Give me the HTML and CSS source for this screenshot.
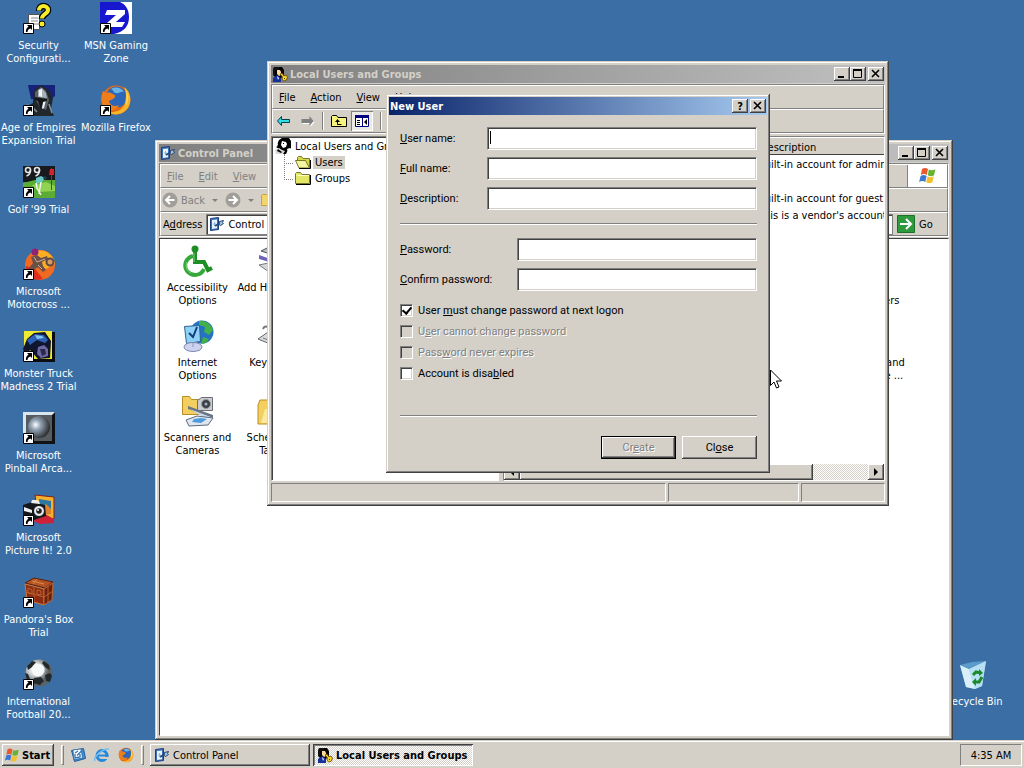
FILE: index.html
```html
<!DOCTYPE html>
<html lang="en">

<head>
  <meta charset="UTF-8">
  <meta name="viewport" content="width=device-width, initial-scale=1.0">
  <title>Desktop</title>
  <link rel="stylesheet" href="styles.css">
</head>

<body>
  <!-- shared icons -->
  <svg class="sprite" aria-hidden="true">
    <symbol id="shortcut" viewBox="0 0 11 11">
      <path fill="#fff" stroke="#000" d="M.5.5h10v10H.5z"/>
      <path d="M4 2h5v5L7.500 5.500C5.500 6 4.500 7 4.500 9H3C2.500 7 3.500 5 5.500 3.500z"/>
    </symbol>
    <symbol id="panel" viewBox="0 0 16 16">
      <path fill="#3d6fb5" stroke="#1c3f80" d="M1.500 2.500l8-1v12l-8 1z"/>
      <path fill="#e6f3fc" d="M3 4l5-.6v8.800L3 13z"/>
      <path fill="none" stroke="#8fbde6" d="M5.500 6v4M4 8h3"/>
      <path fill="none" stroke="#2b4a75" stroke-width="2" d="M6 10l5-3"/>
      <path fill="#9fc3e8" stroke="#24436e" d="M10.500 5.500l4-1-1 2 1 1-3 2-1.500-1z"/>
    </symbol>
    <symbol id="users" viewBox="0 0 16 16">
      <path d="M1 4l3-3h6l2 3v5l-3 3H4L1 9z"/>
      <path fill="#ffd7a0" d="M5 4h3l1 2v3L7 10 5 8z"/>
      <path fill="#15309c" d="M1 12l4-3 4 3v4H1z"/>
      <path fill="#fff" d="M5 10l2 2-1 2z"/>
      <path fill="#111" d="M2 1h5v3H3v5H1V3z"/>
      <path fill="#ffd52b" stroke="#5a4300" stroke-width=".8" d="M8 8l2-1 2 3 2-1 1.500 2-1 3-3 1-1.500-2 .5-2z"/>
      <path fill="#4b3500" d="M12 12h1v1h-1z"/>
    </symbol>
    <symbol id="users-tree" viewBox="0 0 16 16">
      <path d="M4 2l3-2h7l2 3v7l-3 2-2 4H3l1-5-3-2z"/>
      <path fill="#fff" d="M7 3l4 1 1 2-1 3-3 1-2-3zM12 11l3-1v3l-2 2zM1 4l2 2-1 3-2-1z"/>
      <path fill="#d9d9d9" d="M0 12l4-2 3 2 3 1-2 3H1z"/>
      <path d="M3 11l4 3-1 1-4-2zM8 5h1v1H8z"/>
    </symbol>
    <symbol id="folder" viewBox="0 0 16 16">
      <path fill="#e3e765" stroke="#77772b" d="M.5 3.500l1-1h4l1.500 2h7.500v9H.5z"/>
      <path fill="none" stroke="#fffdc0" d="M1.500 5.500h12"/>
      <path fill="none" stroke="#000" d="M1 14.500h14.500V5"/>
    </symbol>
    <symbol id="folder-open" viewBox="0 0 16 16">
      <path fill="#d6d84e" stroke="#77772b" d="M2.500 6V3.500l1-1h3l1.500 2h6.500v9"/>
      <path fill="#f4f5a0" stroke="#77772b" d="M.5 6.500h10l4 7.500H4z"/>
      <path fill="none" stroke="#000" d="M4 14.500h11.500V6"/>
    </symbol>
    <symbol id="flag" viewBox="0 0 20 20">
      <path fill="#e65a2c" d="M4 3c2-1.500 4-1.500 6 0L8.800 9C7 7.800 5 7.800 2.800 9z"/>
      <path fill="#64b332" d="M10.800 3.500c2 1 4 1 6.600-.2L16 9.300c-2 1.200-4 1.200-6.200 0z"/>
      <path fill="#3c78d2" d="M2.600 10c2-1.200 4-1.200 6 0l-1.300 6c-1.800-1.200-4-1.200-6.200 0z"/>
      <path fill="#f5c02c" d="M9.500 10.300c2 1.200 4 1.200 6.300 0l-1.400 6c-2 1.200-4 1.200-6.200 0z"/>
    </symbol>
    <symbol id="firefox" viewBox="0 0 32 32">
      <circle cx="16" cy="16" r="14.500" fill="#e66a14"/>
      <circle cx="16.500" cy="13" r="10.500" fill="#2b66b8"/>
      <path fill="#69b5e8" d="M11 5c5-3 11-1 13 3-4-1-5 2-8 1-3 0-2-3-5-4z"/>
      <path fill="#f8b52a" d="M24 3c6 4 8 12 5 19-4 8-14 11-21 6 8 1 15-2 17-9 1-5 2-9-1-16z"/>
      <path fill="#ee7d1c" d="M3 7l3 2c3-1 5 0 7 1 3 1 3 3 0 5l-4 2c1 5 6 6 10 4-2 5-8 7-13 4C1 21 0 14 3 7z"/>
      <path fill="#ffd45c" d="M26 6c3 5 3 11 0 16 0-5 1-11 0-16z"/>
    </symbol>
    <symbol id="minimize" viewBox="0 0 12 10"><path d="M2 7h6v2H2z"/></symbol>
    <symbol id="maximize" viewBox="0 0 12 10">
      <path fill="none" stroke="#000" d="M1.500.5h8v8h-8z"/>
      <path d="M1 0h9v2H1z"/>
    </symbol>
    <symbol id="close" viewBox="0 0 12 10">
      <path fill="none" stroke="#000" stroke-width="1.600" d="M2 1l7 7M9 1L2 8"/>
    </symbol>
  </svg>

  <main class="desktop">
    <!-- desktop shortcuts -->
    <nav class="shortcuts" aria-label="Desktop">
      <a class="shortcut" href="#">
        <span class="pic">
          <svg viewBox="0 0 32 32">
            <path fill="#fff" stroke="#555" d="M5.500 12.500h11v15h-11z"/>
            <path stroke="#888" d="M8 16h7M8 19h7M8 22h7"/>
            <path fill="none" stroke="#000" stroke-width="6.500" d="M16 9c0-7 9-6 9-1 0 4-6 4-6 9"/>
            <path fill="none" stroke="#f7ec2a" stroke-width="4" d="M16 8.500c0-6.500 9-5.500 9-.5 0 4-6 4-6 8.500"/>
            <circle cx="19" cy="22" r="3" fill="#f7ec2a" stroke="#000"/>
          </svg>
          <svg class="arrow"><use href="#shortcut"/></svg>
        </span>
        <span>Security<br>Configurati...</span>
      </a>
      <a class="shortcut" href="#">
        <span class="pic">
          <svg viewBox="0 0 32 32">
            <path fill="#1717cf" d="M0 0h32v32H0z"/>
            <path fill="#fff" d="M20 0h12v32H14c10-2 15-8 15-17 0-8-4-13-9-15z"/>
            <path fill="#fff" d="M7 8h18v4l-9 8h9l-3 5H7v-4l9-8H5z"/>
          </svg>
          <svg class="arrow"><use href="#shortcut"/></svg>
        </span>
        <span>MSN Gaming<br>Zone</span>
      </a>
      <a class="shortcut" href="#">
        <span class="pic">
          <svg viewBox="0 0 32 32">
            <path fill="#17217a" d="M5 1h27v11l-4 3H8z"/>
            <path fill="#22272c" d="M0 32l2-9 8-4V8l7-7 9 5 4 8-2 11 3 7z"/>
            <path fill="#59626a" d="M12 8l6-5 5 4 3 9-3 10-6-3-5-8z"/>
            <path fill="#a7b0b6" d="M15 6l4-2 4 5 1 5-9-1z"/>
            <path fill="#f0f2f3" d="M16 6l3-1v8l-3-1zM20 17l3-1-2 8-2 1z"/>
            <path fill="#14171a" d="M12 13l12 2v2l-4 1-2 8-3-9-3-1z"/>
            <path fill="none" stroke="#82909b" stroke-width="1.500" d="M4 21l5 2 5 5M26 20l3 9"/>
          </svg>
          <svg class="arrow"><use href="#shortcut"/></svg>
        </span>
        <span>Age of Empires<br>Expansion Trial</span>
      </a>
      <a class="shortcut" href="#">
        <span class="pic">
          <svg><use href="#firefox"/></svg>
          <svg class="arrow"><use href="#shortcut"/></svg>
        </span>
        <span>Mozilla Firefox</span>
      </a>
      <a class="shortcut first" href="#">
        <span class="pic">
          <svg viewBox="0 0 32 32">
            <path fill="#17191d" d="M0 0h32v16H0z"/>
            <path fill="#5cab35" d="M0 17l12-3h20v18H0z"/>
            <path fill="#91d250" d="M9 19l14-3 9 4v5l-16 1z"/>
            <g fill="none" stroke="#e4e6e4" stroke-width="1.600">
              <circle cx="5" cy="4" r="2.500"/><path d="M7.500 4c0 3-1 5-4 6"/>
              <circle cx="14" cy="4" r="2.500"/><path d="M16.500 4c0 3-1 5-4 6"/>
            </g>
            <path stroke="#b51c26" d="M28.500 2v22"/>
            <path fill="#d9202d" d="M27 3h4v6h-5z"/>
            <path fill="#65c8c4" d="M13 12l5-2 4 2-3 4-6 2z"/>
            <path fill="none" stroke="#eef5f5" stroke-width="1.500" d="M13 17l1 5 4 7M18 16l-2 12"/>
            <circle cx="22" cy="12" r="1.800" fill="#203c50"/>
          </svg>
          <svg class="arrow"><use href="#shortcut"/></svg>
        </span>
        <span>Golf '99 Trial</span>
      </a>
      <a class="shortcut first" href="#">
        <span class="pic">
          <svg viewBox="0 0 32 32">
            <circle cx="17" cy="17" r="15" fill="#f06a22"/>
            <path fill="#ffae22" d="M14 3c9-2 17 4 18 13l-9 5-10-6z"/>
            <path fill="#dd2f1d" d="M3 18l9 3 8 10c-8 3-18-3-17-13z"/>
            <circle cx="12" cy="4" r="3.500" fill="#8d2276"/>
            <path fill="#6b5048" d="M8 9l6-2 4 3 6-2 1 3-6 3 1 4 3 4-3 2-5-5-6 4-3-3 4-5z"/>
            <path fill="none" stroke="#c9b09c" d="M11 9l3 5 8-3M15 17l4 4"/>
            <circle cx="27" cy="14" r="3.500" fill="#d69a60" stroke="#5c4a4a" stroke-width="2"/>
          </svg>
          <svg class="arrow"><use href="#shortcut"/></svg>
        </span>
        <span>Microsoft<br>Motocross ...</span>
      </a>
      <a class="shortcut first" href="#">
        <span class="pic">
          <svg viewBox="0 0 32 32">
            <path fill="#0b0d12" d="M2 2h30v30H2z"/>
            <path fill="#f0ea32" d="M1 1h28v28H1z"/>
            <path fill="#10162d" d="M0 19L4 9l7-6 11-1 6 9-1 17-12 1-8-9-4 6z"/>
            <path fill="#2c61b6" d="M4 10l8-6 9 1 4 5-3 3-8-3-7 5z"/>
            <path fill="#82c3ee" d="M12 5l7 1 2 2-7 1z"/>
            <path fill="#6c68a4" d="M15 17l6-2 4 4v7l-7 2-4-4z"/>
            <path fill="#2b2947" d="M17 19h5l1 5-4 2z"/>
          </svg>
          <svg class="arrow"><use href="#shortcut"/></svg>
        </span>
        <span>Monster Truck<br>Madness 2 Trial</span>
      </a>
      <a class="shortcut first" href="#">
        <span class="pic">
          <svg viewBox="0 0 32 32">
            <defs>
              <radialGradient id="steel" cx=".35" cy=".4" r=".65">
                <stop offset="0" stop-color="#fff"/>
                <stop offset=".35" stop-color="#93a3b4"/>
                <stop offset="1" stop-color="#2c2f30"/>
              </radialGradient>
            </defs>
            <path fill="#101214" d="M0 0h32v32H0z"/>
            <path fill="#d7e6ef" d="M0 0h32l-3 3H3v26l-3 3z"/>
            <path fill="#555b5e" d="M3 3h26v26H3z"/>
            <circle cx="16" cy="15" r="11" fill="url(#steel)"/>
          </svg>
          <svg class="arrow"><use href="#shortcut"/></svg>
        </span>
        <span>Microsoft<br>Pinball Arca...</span>
      </a>
      <a class="shortcut first" href="#">
        <span class="pic">
          <svg viewBox="0 0 32 32">
            <path fill="#f5b02d" stroke="#8a1f16" d="M12 1l19 2v22l-16-2z"/>
            <path fill="#2d77a0" d="M16 5l12 2v13l-10-1z"/>
            <path fill="#e2812c" d="M17 16l6-6 5 5v5l-10-1z"/>
            <path fill="#cf2138" d="M8 26l14-6 9 5v4l-14 1z"/>
            <path fill="#15171a" d="M0 11l9-3 13 3 1 11-12 4-11-3z"/>
            <path fill="#eee" d="M1 13l8 3v3l-8-2zM9 6h6l2 4-9-1z"/>
            <circle cx="16" cy="17" r="5.500" fill="#e7ebef" stroke="#111"/>
            <circle cx="16" cy="17" r="2.800" fill="#222"/>
            <circle cx="15" cy="16" r="1" fill="#fff"/>
          </svg>
          <svg class="arrow"><use href="#shortcut"/></svg>
        </span>
        <span>Microsoft<br>Picture It! 2.0</span>
      </a>
      <a class="shortcut first" href="#">
        <span class="pic">
          <svg viewBox="0 0 32 32">
            <path fill="#b65323" stroke="#5e1d0a" d="M2 7l9-5 19 4-8 6z"/>
            <path fill="#8c2c13" stroke="#cf7b3a" d="M2 8l19 5v16L4 24z"/>
            <path fill="#6d1f0e" stroke="#c06a30" d="M21 13l9-6-1 17-8 5z"/>
            <path fill="none" stroke="#b9622f" d="M11 10v17M3 16l18 5 9-6M25 10v17M5 12l4 2v4l-4-1zM14 14l4 1v4l-4-1z"/>
            <path fill="none" stroke="#d98c4c" d="M9 5l12 3M14 3l-4 5"/>
          </svg>
          <svg class="arrow"><use href="#shortcut"/></svg>
        </span>
        <span>Pandora's Box<br>Trial</span>
      </a>
      <a class="shortcut first" href="#">
        <span class="pic">
          <svg viewBox="0 0 32 32">
            <defs>
              <radialGradient id="ball" cx=".35" cy=".35">
                <stop offset="0" stop-color="#fff"/>
                <stop offset=".5" stop-color="#cfd2d4"/>
                <stop offset="1" stop-color="#5b6165"/>
              </radialGradient>
            </defs>
            <circle cx="16" cy="15" r="13.500" fill="url(#ball)"/>
            <path fill="#23282b" d="M4 8l5-5 4 1-4 5-4 3zM21 3l5 4 1 5-4-2-4-5zM22 17l5-2 2 3-2 6-4-1zM11 20l7-1 3 4-4 4-7-2zM2 15l3 1 2 5-3 1z"/>
            <circle cx="15" cy="12" r="6.500" fill="#f7f8f8"/>
          </svg>
          <svg class="arrow"><use href="#shortcut"/></svg>
        </span>
        <span>International<br>Football 20...</span>
      </a>
    </nav>

    <a class="shortcut recycle" href="#">
      <span class="pic">
        <svg viewBox="0 0 32 32">
          <path fill="#8fc2e0" d="M2 7l9 4 17-8-4 25-7 3-9-2z"/>
          <path fill="#d9f0fa" d="M2 7l9 4 6 20-9-2z"/>
          <path fill="#5b9bc9" d="M2 7l12-3 14-1-17 8z"/>
          <path fill="#b7e0f2" d="M11 11l17-8-4 25-7 3z"/>
          <path fill="none" stroke="#1c8a2c" stroke-width="3" d="M15 17l3-3 5 1M24 19l-3 5h-5"/>
          <path fill="#1c8a2c" d="M21 11l4 4-4 3zM18 20l-4 4 4 4z"/>
        </svg>
      </span>
      <span>Recycle Bin</span>
    </a>

    <!-- Control Panel -->
    <section class="window control-panel">
      <header class="titlebar">
        <svg class="icon"><use href="#panel"/></svg>
        <h2>Control Panel</h2>
        <button class="caption" aria-label="Minimize"><svg><use href="#minimize"/></svg></button>
        <button class="caption" aria-label="Maximize"><svg><use href="#maximize"/></svg></button>
        <button class="caption close" aria-label="Close"><svg><use href="#close"/></svg></button>
      </header>
      <div class="bars">
        <div class="menubar dim">
          <button><u>F</u>ile</button>
          <button><u>E</u>dit</button>
          <button><u>V</u>iew</button>
          <button>F<u>a</u>vorites</button>
          <button><u>T</u>ools</button>
          <button><u>H</u>elp</button>
          <span class="brand"><svg><use href="#flag"/></svg></span>
        </div>
        <div class="toolbar dim">
          <button class="back">
            <svg viewBox="0 0 16 16"><circle cx="8" cy="8" r="7.500" fill="#a09e98"/><path fill="none" stroke="#fff" stroke-width="2" d="M12.500 8H4M8 4L4 8l4 4"/></svg>
            Back
          </button>
          <span class="drop"></span>
          <button aria-label="Forward">
            <svg viewBox="0 0 16 16"><circle cx="8" cy="8" r="7.500" fill="#a09e98"/><path fill="none" stroke="#fff" stroke-width="2" d="M3.500 8H12M8 4l4 4-4 4"/></svg>
          </button>
          <span class="drop"></span>
          <button aria-label="Up"><svg viewBox="0 0 16 16"><path fill="#f3d56a" stroke="#c9a13a" d="M.5 3.500l1-1h4l1.500 2h8v9H.5z"/></svg></button>
        </div>
        <div class="addressbar">
          <label for="address">A<u>d</u>dress</label>
          <div class="address">
            <svg class="icon"><use href="#panel"/></svg>
            <input type="text" id="address" value="Control Panel">
          </div>
          <button class="go">
            <svg viewBox="0 0 18 18"><path fill="#2f9a3d" stroke="#1d6f2a" d="M.5.5h17v17H.5z"/><path fill="none" stroke="#fff" stroke-width="2" d="M3 9h10M9 4l5 5-5 5"/></svg>
            Go
          </button>
        </div>
      </div>
      <div class="items">
        <a class="item" href="#">
          <svg viewBox="0 0 32 32">
            <circle cx="13" cy="4" r="3.500" fill="#1e8f24"/>
            <path fill="none" stroke="#1e8f24" stroke-width="4" d="M13 7v10h9l4 8 4-2"/>
            <path fill="none" stroke="#35a83a" stroke-width="4" d="M11 11c-7 2-10 9-6 15 5 6 14 5 17-2"/>
            <path fill="none" stroke="#7fd67f" d="M12 8v9M5 17c-2 4 0 9 4 11"/>
          </svg>
          <span>Accessibility<br>Options</span>
        </a>
        <a class="item" href="#">
          <svg viewBox="0 0 32 32">
            <path fill="#b9bcc4" stroke="#555" d="M4 6l10-5 14 4-9 6z"/>
            <path fill="#6d64b8" d="M2 10l17 6 11-7v4l-11 6-17-5z"/>
            <path fill="#d5d7dc" stroke="#777" d="M2 20l14-3 12 6-13 6z"/>
          </svg>
          <span>Add Hardware</span>
        </a>
        <a class="item last" href="#">
          <svg viewBox="0 0 32 32"><path fill="#999" d="M2 12h12v12H2z"/></svg>
          <span>Game<br>Controllers</span>
        </a>
        <a class="item" href="#">
          <svg viewBox="0 0 32 32">
            <circle cx="20" cy="12" r="11.500" fill="#2472c8"/>
            <path fill="#43b04a" d="M17 1c6-1 12 3 14 9l-4 5-5-3 1-5-6-2zM21 17l6 2-3 4-5 1z"/>
            <path fill="#8fd2f7" stroke="#31628f" d="M2.500 6.500l15-1 1 16-14 2z"/>
            <path fill="none" stroke="#173c7a" stroke-width="2" d="M7 13l4 4 4-10"/>
            <ellipse cx="11" cy="27" rx="9" ry="4.500" fill="#cdd3ee" stroke="#8087b0"/>
            <path stroke="#8e95bd" d="M11 23v4"/>
          </svg>
          <span>Internet<br>Options</span>
        </a>
        <a class="item" href="#">
          <svg viewBox="0 0 32 32">
            <path fill="none" stroke="#777" stroke-width="2" d="M6 9c3-7 8 4 14-3"/>
            <path fill="#d8dae0" stroke="#666" d="M1 19l10-7 19 6-12 8z"/>
            <path stroke="#777" d="M6 18l13 5M10 16l13 4"/>
          </svg>
          <span>Keyboard</span>
        </a>
        <a class="item last" href="#">
          <svg viewBox="0 0 32 32"><circle cx="14" cy="15" r="10" fill="#2472c8"/></svg>
          <span>Regional and<br>Language ...</span>
        </a>
        <a class="item" href="#">
          <svg viewBox="0 0 32 32">
            <path fill="#f3cf62" stroke="#b98f25" d="M.5 1.500h7l2 3h9v15H.5z"/>
            <path fill="#c9ccd0" stroke="#6b6f75" d="M15.500 5.500l4-3h11v13h-15z"/>
            <circle cx="24" cy="9" r="4.500" fill="#3c3f44" stroke="#999"/>
            <circle cx="24" cy="9" r="1.500" fill="#a5b5c8"/>
            <path fill="#6b7683" d="M6 11l25 9v3L6 14z"/>
            <path fill="#c6d9ee" d="M8 14l20 8-4 2z"/>
            <path fill="#dfe6ee" stroke="#5d6c80" d="M4 25l11-4 16 2-5 7-19 1z"/>
            <path fill="#4f9be0" d="M12 24l7-1 6 1-6 4-9-1z"/>
          </svg>
          <span>Scanners and<br>Cameras</span>
        </a>
        <a class="item" href="#">
          <svg viewBox="0 0 32 32">
            <path fill="#f3cf62" stroke="#b98f25" d="M1 10l2-5h8l2 3h14v21H1z"/>
            <path fill="#fbe9a0" d="M4 28l4-14h21l-4 14z"/>
          </svg>
          <span>Scheduled<br>Tasks</span>
        </a>
      </div>
    </section>

    <!-- Local Users and Groups -->
    <section class="window local-users">
      <header class="titlebar">
        <svg class="icon"><use href="#users"/></svg>
        <h2>Local Users and Groups</h2>
        <button class="caption" aria-label="Minimize"><svg><use href="#minimize"/></svg></button>
        <button class="caption" aria-label="Maximize"><svg><use href="#maximize"/></svg></button>
        <button class="caption close" aria-label="Close"><svg><use href="#close"/></svg></button>
      </header>
      <div class="bars">
        <div class="menubar">
          <button><u>F</u>ile</button>
          <button><u>A</u>ction</button>
          <button><u>V</u>iew</button>
          <button><u>H</u>elp</button>
        </div>
        <div class="toolbar mmc">
          <button aria-label="Back"><svg viewBox="0 0 16 16"><path fill="#2fe0e8" stroke="#04404a" d="M1.500 8l4-4.500v3h8v3h-8v3z"/></svg></button>
          <button aria-label="Forward"><svg viewBox="0 0 16 16"><path fill="#fff" d="M15.500 9l-4 5v-3h-8V8h8z"/><path fill="#808080" d="M14.500 8l-4 5v-3h-8V6h8V3z"/></svg></button>
          <i class="divider"></i>
          <button aria-label="Up one level"><svg viewBox="0 0 16 16"><path fill="#f6f47c" stroke="#000" d="M.5 3.500l1-1h4l1.500 2h8.500v9H.5z"/><path fill="none" stroke="#000" d="M6.500 7v4.500h4"/><path d="M4 9l2.500-3L9 9z"/></svg></button>
          <button class="pressed" aria-label="Show tree"><svg viewBox="0 0 16 16"><path fill="#fff" stroke="#000080" d="M1.500 2.500h13v11h-13z"/><path fill="#000080" d="M1 2h14v3H1zM8 5h1v8H8z"/><path stroke="#000" d="M3 7.500h3M3 9.500h3M3 11.500h3"/><path d="M13 6v6l-3-3z"/></svg></button>
          <i class="divider"></i>
        </div>
      </div>
      <div class="panes">
        <ul class="tree">
          <li><svg class="icon"><use href="#users-tree"/></svg><span>Local Users and Groups (Local)</span></li>
          <li class="child"><svg class="icon"><use href="#folder-open"/></svg><span class="selected">Users</span></li>
          <li class="child"><svg class="icon"><use href="#folder"/></svg><span>Groups</span></li>
        </ul>
        <div class="list">
          <div class="rows">
            <table>
              <thead>
                <tr><th>Name</th><th>Full Name</th><th>Description</th></tr>
              </thead>
              <tbody>
                <tr><td>Administrator</td><td></td><td>Built-in account for administering the computer/domain</td></tr>
                <tr><td>ASPNET</td><td></td><td></td></tr>
                <tr><td>Guest</td><td></td><td>Built-in account for guest access to the computer/domain</td></tr>
                <tr><td>SUPPORT</td><td></td><td>This is a vendor's account for the Help and Support Service</td></tr>
              </tbody>
            </table>
          </div>
          <div class="scrollbar">
            <button aria-label="Scroll left"><svg viewBox="0 0 8 8"><path d="M6 0v8L2 4z"/></svg></button>
            <span class="thumb"></span>
            <button aria-label="Scroll right"><svg viewBox="0 0 8 8"><path d="M2 0v8l4-4z"/></svg></button>
          </div>
        </div>
      </div>
      <footer class="statusbar"><span></span><span></span><span></span></footer>
    </section>

    <!-- New User dialog -->
    <section class="window dialog" role="dialog" aria-labelledby="dialogTitle">
      <header class="titlebar active">
        <h2 id="dialogTitle">New User</h2>
        <button class="caption help" aria-label="Help">?</button>
        <button class="caption close" aria-label="Close"><svg><use href="#close"/></svg></button>
      </header>
      <form class="dialog-body">
        <div class="fields">
          <label for="userName"><u>U</u>ser name:</label>
          <div class="focused"><input type="text" id="userName"></div>
          <label for="fullName"><u>F</u>ull name:</label>
          <input type="text" id="fullName">
          <label for="description"><u>D</u>escription:</label>
          <input type="text" id="description">
        </div>
        <hr>
        <div class="fields passwords">
          <label for="password"><u>P</u>assword:</label>
          <input type="password" id="password">
          <label for="confirm"><u>C</u>onfirm password:</label>
          <input type="password" id="confirm">
        </div>
        <div class="checks">
          <label><input type="checkbox" checked>User <u>m</u>ust change password at next logon</label>
          <label class="disabled"><input type="checkbox" disabled>U<u>s</u>er cannot change password</label>
          <label class="disabled"><input type="checkbox" disabled>Pass<u>w</u>ord never expires</label>
          <label><input type="checkbox">Account is disa<u>b</u>led</label>
        </div>
        <hr>
        <div class="actions">
          <button type="submit" class="default" disabled>Cr<u>e</u>ate</button>
          <button type="button">Cl<u>o</u>se</button>
        </div>
      </form>
    </section>

    <svg class="cursor" viewBox="0 0 12 20" aria-hidden="true">
      <path fill="#fff" stroke="#000" d="M.5 1v15.500L4 13l2.500 6 2.500-1-2.500-6h5z"/>
    </svg>
  </main>

  <!-- taskbar -->
  <footer class="taskbar">
    <button class="start"><svg><use href="#flag"/></svg>Start</button>
    <i class="grip"></i>
    <div class="quick">
      <button aria-label="Show Desktop"><svg viewBox="0 0 16 16"><path fill="#3f8fd0" stroke="#245f9c" d="M1.500 3.500l12-2 2 10-11 3z"/><path fill="#fff" stroke="#245f9c" stroke-width=".7" d="M3 3l8-1 1.500 9L4 12.500z"/><path fill="none" stroke="#2d73b5" stroke-width="1.300" d="M5 6l3-2M5 7v4l5-1V7M7 8.500l5-5"/></svg></button>
      <button aria-label="Internet Explorer"><svg viewBox="0 0 16 16"><circle cx="8" cy="8.500" r="5" fill="none" stroke="#2489d8" stroke-width="3"/><path fill="#d4d0c8" d="M8 10h7v2H8z"/><path fill="#2489d8" d="M4 7.500h10.500v2H4z"/><path fill="none" stroke="#74bdf0" stroke-width="1.500" d="M1 14C-1 10 9 1 15 2"/></svg></button>
      <button aria-label="Firefox"><svg><use href="#firefox"/></svg></button>
    </div>
    <i class="grip"></i>
    <button class="task"><svg class="icon"><use href="#panel"/></svg>Control Panel</button>
    <button class="task current"><svg class="icon"><use href="#users"/></svg>Local Users and Groups</button>
    <time class="clock">4:35 AM</time>
  </footer>
</body>

</html>
```
FILE: styles.css
```css
* {
  box-sizing: border-box;
}

body {
  margin: 0;
  height: 100vh;
  display: flex;
  flex-direction: column;
  overflow: hidden;
  font-family: 'DejaVu Sans Condensed', 'DejaVu Sans', sans-serif;
  font-size: 11px;
  line-height: 13px;
  color: #000;
  background: #3a6ea5;
}

button,
input {
  font: inherit;
  color: inherit;
}

button {
  margin: 0;
  padding: 0;
  border: none;
  background: none;
}

a {
  color: inherit;
  text-decoration: none;
}

svg {
  display: block;
  flex: none;
}

h2 {
  margin: 0;
  font-size: 11px;
}

.sprite {
  position: absolute;
  width: 0;
  height: 0;
}

.icon {
  width: 16px;
  height: 16px;
}

/* desktop */
.desktop {
  position: relative;
  flex: 1;
  min-height: 0;
}

.shortcuts {
  display: grid;
  grid-template-columns: 77px 78px;
  grid-auto-rows: 82px;
  padding-top: 2px;
}

.shortcut {
  display: flex;
  flex-direction: column;
  align-items: center;
  gap: 5px;
  color: #fff;
  text-align: center;
  white-space: nowrap;
}

.shortcut.first {
  grid-column: 1;
}

.pic {
  position: relative;
}

.pic svg {
  width: 32px;
  height: 32px;
}

.pic .arrow {
  position: absolute;
  left: 0;
  bottom: 0;
  width: 11px;
  height: 11px;
}

.recycle {
  position: absolute;
  right: 12px;
  bottom: 32px;
  width: 76px;
}

/* windows */
.window {
  position: absolute;
  display: flex;
  flex-direction: column;
  padding: 4px;
  background: #d4d0c8;
  box-shadow: inset -1px -1px #404040, inset 1px 1px #d4d0c8,
    inset -2px -2px #808080, inset 2px 2px #fff;
}

.control-panel {
  left: 155px;
  right: 71px;
  top: 140px;
  bottom: 0;
}

.local-users {
  left: 267px;
  right: 135px;
  top: 61px;
  bottom: 234px;
}

.dialog {
  left: 386px;
  top: 94px;
  width: 384px;
  padding: 3px;
}

.titlebar {
  display: flex;
  align-items: center;
  height: 18px;
  padding: 0 1px;
  color: #d4d0c8;
  background: linear-gradient(to right, #808080, #c0c0c0);
}

.titlebar h2 {
  flex: 1;
  margin-left: 2px;
}

.titlebar.active {
  padding-left: 0;
  color: #fff;
  background: linear-gradient(to right, #0a246a, #a6caf0);
}

.titlebar.active h2 {
  margin-left: 1px;
}

.caption {
  display: flex;
  justify-content: center;
  align-items: center;
  width: 16px;
  height: 14px;
  color: #000;
  background: #d4d0c8;
  box-shadow: inset -1px -1px #404040, inset 1px 1px #fff, inset -2px -2px #808080;
}

.caption svg {
  width: 12px;
  height: 10px;
}

.caption.close {
  margin-left: 2px;
}

.caption.help {
  font-weight: bold;
}

.bars {
  margin-top: 1px;
  border: 1px solid #808080;
  border-color: #808080 #fff #fff #808080;
}

.menubar,
.toolbar,
.addressbar {
  display: flex;
  align-items: center;
  height: 24px;
  border: 1px solid;
  border-color: #fff #808080 #808080 #fff;
}

.menubar {
  gap: 15px;
  padding-left: 6px;
}

.dim {
  color: #808080;
}

.brand {
  display: flex;
  justify-content: center;
  align-items: center;
  align-self: stretch;
  width: 40px;
  margin-left: auto;
  background: #fff;
  border-left: 1px solid #808080;
}

.brand svg {
  width: 20px;
  height: 20px;
}

.toolbar {
  padding-left: 1px;
  gap: 7px;
}

.toolbar svg {
  width: 16px;
  height: 16px;
}

.back {
  display: flex;
  align-items: center;
  gap: 3px;
}

.drop {
  border: 3px solid transparent;
  border-top-color: #808080;
  border-bottom: none;
}

.addressbar {
  padding-left: 2px;
  gap: 4px;
}

.address {
  flex: 1;
  display: flex;
  align-items: center;
  gap: 3px;
  height: 21px;
  padding-left: 2px;
  background: #fff;
  border: 1px solid #808080;
  box-shadow: inset 1px 1px #404040;
}

.address input {
  flex: 1;
  min-width: 0;
  padding: 0;
  border: none;
  outline: none;
}

.go {
  display: flex;
  align-items: center;
  gap: 4px;
  width: 50px;
}

.go svg {
  width: 18px;
  height: 18px;
}

.items {
  flex: 1;
  min-height: 0;
  margin-top: 1px;
  padding-top: 6px;
  display: grid;
  grid-template-columns: repeat(auto-fill, 75px);
  grid-auto-rows: 75px;
  background: #fff;
  border: 1px solid #fff;
  border-top-color: #404040;
  border-left-color: #404040;
}

.item {
  display: flex;
  flex-direction: column;
  align-items: center;
  gap: 4px;
  text-align: center;
  white-space: nowrap;
}

.item svg {
  width: 32px;
  height: 32px;
}

.item.last {
  grid-column: -2;
}

/* management console */
.mmc {
  padding-left: 3px;
}

.divider {
  width: 2px;
  height: 18px;
  border-left: 1px solid #808080;
  border-right: 1px solid #fff;
}

.pressed {
  padding: 2px 3px;
  margin-left: -3px;
  background: #ebe9e4;
  box-shadow: inset 1px 1px #808080, inset -1px -1px #fff;
}

.panes {
  flex: 1;
  min-height: 0;
  display: grid;
  grid-template-columns: 228px 1fr;
  gap: 4px;
  margin-top: 2px;
}

.tree,
.list {
  background: #fff;
  border: 1px solid;
  border-color: #808080 #fff #fff #808080;
  box-shadow: inset 1px 1px #404040;
  overflow: hidden;
}

.tree {
  margin: 0;
  padding: 1px 3px;
  list-style: none;
}

.tree li {
  display: flex;
  align-items: center;
  gap: 2px;
  height: 16px;
  white-space: nowrap;
}

.tree .child {
  margin-left: 9px;
}

.child::before {
  content: '';
  align-self: flex-start;
  width: 8px;
  height: 9px;
  border-left: 1px dotted #808080;
  border-bottom: 1px dotted #808080;
}

.child + .child::before {
  height: 16px;
  margin-top: -7px;
}

.tree span {
  padding: 0 2px;
}

.selected {
  background: #d4d0c8;
}

.list {
  display: flex;
  flex-direction: column;
}

.rows {
  flex: 1;
  min-height: 0;
  overflow: hidden;
}

table {
  width: 580px;
  table-layout: fixed;
  border-collapse: separate;
  border-spacing: 0;
  white-space: nowrap;
}

th {
  height: 18px;
  padding: 2px 6px 0;
  font-weight: normal;
  text-align: left;
  background: #d4d0c8;
  box-shadow: inset -1px -1px #404040, inset 1px 1px #fff;
}

th:nth-child(1),
th:nth-child(2) {
  width: 125px;
}

td {
  height: 17px;
  padding: 2px 4px 0;
}

.scrollbar {
  display: flex;
  height: 16px;
  background: repeating-conic-gradient(#fff 0 25%, #d4d0c8 0 50%) 0 0 / 2px 2px;
}

.scrollbar button,
.thumb {
  display: flex;
  justify-content: center;
  align-items: center;
  width: 16px;
  background: #d4d0c8;
  box-shadow: inset -1px -1px #404040, inset 1px 1px #fff, inset -2px -2px #808080;
}

.scrollbar .thumb {
  width: 77%;
  margin-right: auto;
}

.scrollbar svg {
  width: 8px;
  height: 8px;
}

.statusbar {
  display: grid;
  grid-template-columns: 3fr 1fr 84px;
  gap: 2px;
  height: 19px;
  margin-top: 2px;
}

.statusbar span {
  border: 1px solid;
  border-color: #808080 #fff #fff #808080;
}

/* New User dialog */
.dialog {
  font-family: Roboto, 'Liberation Sans', sans-serif;
}

.dialog h2,
.caption.help {
  font-family: 'DejaVu Sans Condensed', 'DejaVu Sans', sans-serif;
}

.dialog-body {
  padding: 12px 10px 11px 11px;
}

.fields {
  display: grid;
  grid-template-columns: 87px 1fr;
  align-items: center;
  gap: 7px 0;
}

.passwords {
  grid-template-columns: 117px 1fr;
}

.fields input {
  display: block;
  width: 100%;
  height: 23px;
  padding: 2px 3px;
  background: #fff;
  border: 1px solid;
  border-color: #808080 #fff #fff #808080;
  border-radius: 0;
  box-shadow: inset 1px 1px #404040, inset -1px -1px #d4d0c8;
  outline: none;
}

.focused {
  position: relative;
}

/* text caret */
.focused::after {
  content: '';
  position: absolute;
  left: 3px;
  top: 4px;
  width: 1px;
  height: 13px;
  background: #000;
}

hr {
  height: 2px;
  margin: 13px 0;
  border: none;
  border-top: 1px solid #808080;
  border-bottom: 1px solid #fff;
}

.checks {
  display: flex;
  flex-direction: column;
  gap: 8px;
  margin: 13px 0 35px;
}

.checks label {
  display: flex;
  align-items: center;
  height: 13px;
  white-space: pre;
}

.checks input {
  appearance: none;
  width: 13px;
  height: 13px;
  margin: 0 5px 0 0;
  background: #fff;
  border: 1px solid;
  border-color: #808080 #fff #fff #808080;
  box-shadow: inset 1px 1px #404040, inset -1px -1px #d4d0c8;
}

.checks input:checked::after {
  content: '';
  display: block;
  width: 4px;
  height: 7px;
  margin: 0 0 0 3px;
  border: solid #000;
  border-width: 0 2px 2px 0;
  transform: rotate(40deg);
}

.checks input:disabled {
  background: #d4d0c8;
}

.disabled,
.actions button:disabled {
  color: #808080;
  text-shadow: 1px 1px #fff;
}

.actions {
  display: flex;
  justify-content: flex-end;
  gap: 6px;
  margin-top: 19px;
}

.actions button {
  width: 75px;
  height: 23px;
  box-shadow: inset -1px -1px #404040, inset 1px 1px #fff, inset -2px -2px #808080;
}

.actions .default {
  border: 1px solid #000;
}

.cursor {
  position: absolute;
  left: 770px;
  top: 369px;
  width: 12px;
  height: 20px;
}

/* taskbar */
.taskbar {
  display: flex;
  align-items: stretch;
  gap: 3px;
  height: 28px;
  padding: 4px 2px 2px;
  background: #d4d0c8;
  box-shadow: inset 0 1px #d4d0c8, inset 0 2px #fff;
}

.start,
.task {
  display: flex;
  align-items: center;
  box-shadow: inset -1px -1px #404040, inset 1px 1px #fff, inset -2px -2px #808080;
}

.start {
  width: 52px;
  padding-left: 2px;
  gap: 1px;
  font-weight: bold;
}

.start svg {
  width: 17px;
  height: 17px;
}

.grip {
  width: 3px;
  margin: 1px 3px 1px 4px;
  border: 1px solid;
  border-color: #fff #808080 #808080 #fff;
}

.quick {
  display: flex;
  align-items: center;
  gap: 8px;
}

.quick svg {
  width: 16px;
  height: 16px;
}

.task {
  width: 160px;
  padding-left: 4px;
  gap: 3px;
  white-space: nowrap;
}

.task.current {
  font-weight: bold;
  background: repeating-conic-gradient(#fff 0 25%, #d4d0c8 0 50%) 0 0 / 2px 2px;
  box-shadow: inset 1px 1px #404040, inset -1px -1px #fff, inset 2px 2px #808080;
}

.clock {
  display: flex;
  justify-content: center;
  align-items: center;
  width: 62px;
  margin-left: auto;
  border: 1px solid;
  border-color: #808080 #fff #fff #808080;
}
```
